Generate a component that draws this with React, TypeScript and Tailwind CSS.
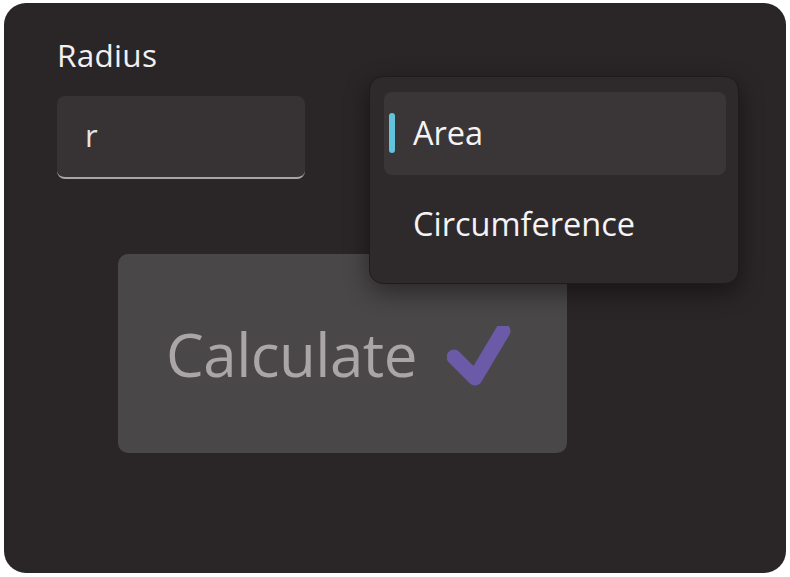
export default function App() {
  return (
    <div className="h-[577px] w-[790px] bg-white pl-[4px] pt-[3px]" style={{ fontFamily: '"Open Sans", "Noto Sans", sans-serif' }}>
      <div className="relative h-[570px] w-[782px] rounded-[22px] bg-[#2a2527] pl-[53px] pt-[32px]">
        <div className="text-[31.5px] leading-[40px] tracking-[0.3px] text-[#f2f0f1]">Radius</div>

        {/* input */}
        <div className="mt-[21px] flex h-[83px] w-[248px] items-center rounded-[8px] border-b-[2px] border-b-[#a8a5a6] bg-[#373334] pl-[28px] pb-[2px]">
          <span className="text-[31px] text-[#e6e4e5]">r</span>
        </div>

        {/* calculate button */}
        <div className="ml-[61px] mt-[75px] flex h-[199px] w-[449px] items-center rounded-[10px] bg-[#4a4748] pl-[48px]">
          <span className="text-[60px] leading-none tracking-[-0.5px] text-[#aaa6a8]">Calculate</span>
          <svg className="ml-[30px] mt-[8px]" width="64" height="64" viewBox="0 0 64 64">
            <path d="M7 31 L28 52 L56 5" fill="none" stroke="#6a5aa8" strokeWidth="15" strokeLinecap="round" strokeLinejoin="round" />
          </svg>
        </div>

        {/* dropdown menu */}
        <div className="absolute left-[365px] top-[73px] flex h-[208px] w-[370px] flex-col gap-[8px] rounded-[14px] border border-[#1f1b1d] bg-[#2e2a2c] pl-[14px] pr-[12px] pt-[15px] shadow-[0_8px_24px_rgba(0,0,0,0.45)]">
          <div className="relative flex h-[83px] items-center rounded-[8px] bg-[#3a3638] pl-[29px]">
            <div className="absolute left-[5px] top-[21px] h-[40px] w-[6px] rounded-full bg-[#62c3dc]" />
            <span className="text-[32.5px] text-[#f5f3f4]">Area</span>
          </div>
          <div className="flex h-[83px] items-center pl-[29px]">
            <span className="text-[32.5px] text-[#f5f3f4]">Circumference</span>
          </div>
        </div>
      </div>
    </div>
  );
}
